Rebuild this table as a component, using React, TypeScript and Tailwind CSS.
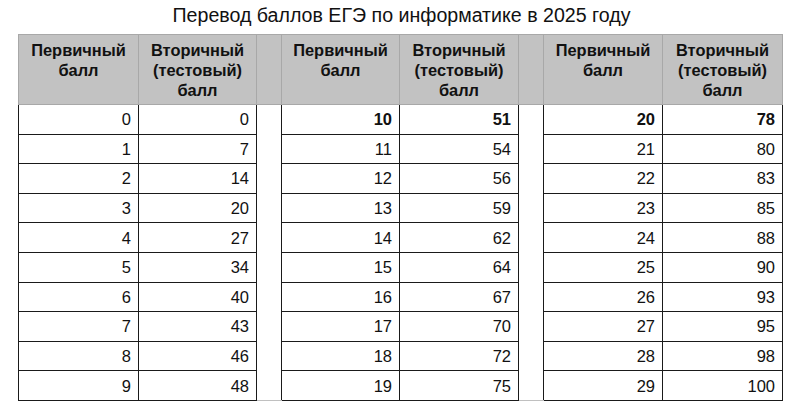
import React from "react";

const rows: [number, number][][] = [0, 1, 2].map((g) =>
  [
    [0, 0], [1, 7], [2, 14], [3, 20], [4, 27], [5, 34], [6, 40], [7, 43], [8, 46], [9, 48],
    [10, 51], [11, 54], [12, 56], [13, 59], [14, 62], [15, 64], [16, 67], [17, 70], [18, 72], [19, 75],
    [20, 78], [21, 80], [22, 83], [23, 85], [24, 88], [25, 90], [26, 93], [27, 95], [28, 98], [29, 100],
  ].slice(g * 10, g * 10 + 10) as [number, number][]
);

const Head = ({ children }: { children: React.ReactNode }) => (
  <th className="border border-[#a8a8a8] bg-[#c2c2c2] align-top pt-[5px] text-center font-bold text-[16.4px] leading-[20px] text-[#111]">
    {children}
  </th>
);

const Spacer = ({ last }: { last?: boolean }) => (
  <td className={`bg-white ${last ? "border-b border-b-[#c0c0c0]" : ""}`}></td>
);

export default function App() {
  return (
    <div className="w-[803px] h-[418px] bg-white" style={{ fontFamily: '"Liberation Sans", Arial, sans-serif' }}>
      <div className="h-[34px] flex items-center justify-center pb-[2px] text-[19.6px] text-[#111]">
        Перевод баллов ЕГЭ по информатике в 2025 году
      </div>
      <table className="ml-[18px] border-collapse table-fixed w-[764px]">
        <colgroup>
          <col className="w-[120px]" />
          <col className="w-[118px]" />
          <col className="w-[25px]" />
          <col className="w-[118px]" />
          <col className="w-[119px]" />
          <col className="w-[25px]" />
          <col className="w-[119px]" />
          <col className="w-[120px]" />
        </colgroup>
        <thead>
          <tr className="h-[70px]">
            {[0, 1, 2].map((g) => (
              <React.Fragment key={g}>
                <Head>
                  Первичный
                  <br />
                  балл
                </Head>
                <Head>
                  Вторичный
                  <br />
                  (тестовый)
                  <br />
                  балл
                </Head>
                {g < 2 && <th className="border border-[#a8a8a8] bg-[#c2c2c2]"></th>}
              </React.Fragment>
            ))}
          </tr>
        </thead>
        <tbody>
          {Array.from({ length: 10 }).map((_, i) => (
            <tr key={i} className="h-[29.6px]">
              {[0, 1, 2].map((g) => {
                const [a, b] = rows[g][i];
                const bold = i === 0 && g > 0;
                const cls = `border border-[#1a1a1a] text-right pr-[7px] text-[16.5px] leading-[20px] text-[#111] ${bold ? "font-bold" : ""}`;
                return (
                  <React.Fragment key={g}>
                    <td className={cls}>{a}</td>
                    <td className={cls}>{b}</td>
                    {g < 2 && <Spacer last={i === 9} />}
                  </React.Fragment>
                );
              })}
            </tr>
          ))}
        </tbody>
      </table>
    </div>
  );
}
